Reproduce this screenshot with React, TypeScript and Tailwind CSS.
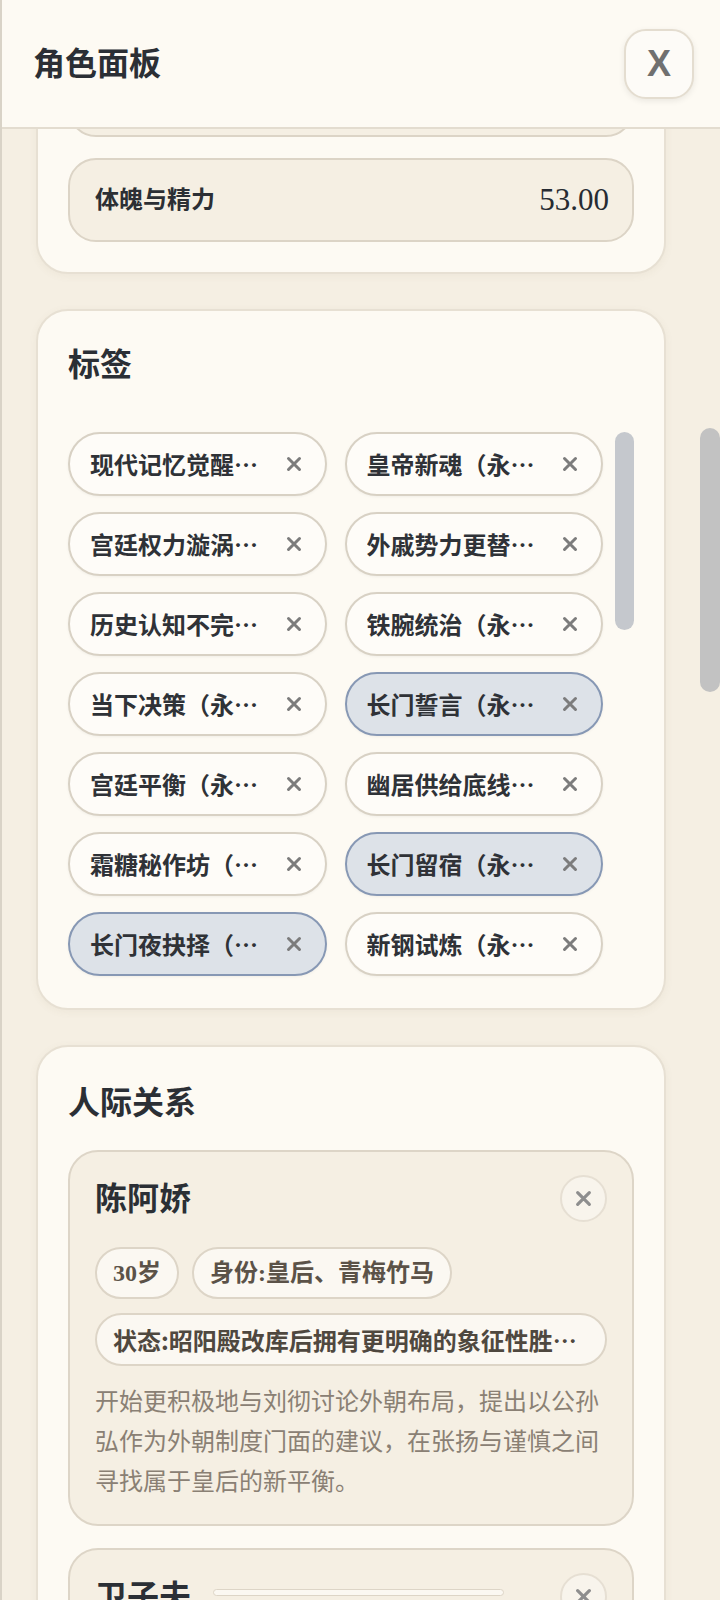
import React from "react";

const tags: { t: string; hl?: boolean }[] = [
  { t: "现代记忆觉醒（永久）" },
  { t: "皇帝新魂（永久）" },
  { t: "宫廷权力漩涡（永久）" },
  { t: "外戚势力更替（永久）" },
  { t: "历史认知不完整（永久）" },
  { t: "铁腕统治（永久）" },
  { t: "当下决策（永久）" },
  { t: "长门誓言（永久）", hl: true },
  { t: "宫廷平衡（永久）" },
  { t: "幽居供给底线（永久）" },
  { t: "霜糖秘作坊（永久）" },
  { t: "长门留宿（永久）", hl: true },
  { t: "长门夜抉择（永久）", hl: true },
  { t: "新钢试炼（永久）" },
];

function XIcon({ size = 16, color = "#7a7a7a", sw = 3 }: { size?: number; color?: string; sw?: number }) {
  return (
    <svg width={size} height={size} viewBox="0 0 16 16" fill="none">
      <path d="M2.5 2.5 L13.5 13.5 M13.5 2.5 L2.5 13.5" stroke={color} strokeWidth={sw} strokeLinecap="round" />
    </svg>
  );
}

function StatRow({ label, value }: { label: string; value: string }) {
  return (
    <div className="h-[84px] w-full rounded-[28px] border-2 border-[#dcd4c6] bg-[#f5efe3] flex items-center justify-between pl-[25px] pr-[23px]">
      <span className="text-[24px] font-bold text-[#2c2f34]">{label}</span>
      <span className="text-[31px] text-[#262b32] font-['Liberation_Serif',serif]">{value}</span>
    </div>
  );
}

function Card({ children, className = "" }: { children: React.ReactNode; className?: string }) {
  return (
    <div
      className={
        "w-[630px] shrink-0 rounded-[32px] border-2 border-[#e7e0d3] bg-[#fdfaf3] px-[30px] shadow-[0_2px_8px_rgba(120,100,70,0.06)] " +
        className
      }
    >
      {children}
    </div>
  );
}

export default function App() {
  return (
    <div className="w-[720px] h-[1600px] overflow-hidden flex flex-col bg-[#f5efe3] border-l-2 border-[#d9d3c7] font-['Liberation_Serif','Noto_Sans_CJK_SC',serif] text-[#2b2f35]">
      {/* Header */}
      <div className="h-[129px] shrink-0 bg-[#fdfaf3] border-b-2 border-[#e3dccf] flex items-center justify-between pl-[31px] pr-[26px] relative z-10">
        <h1 className="text-[32px] font-bold text-[#2b2f35] leading-[40px]">角色面板</h1>
        <button className="w-[70px] h-[70px] rounded-[22px] border-2 border-[#e4ddd0] bg-[#fdfbf7] shadow-[0_2px_6px_rgba(0,0,0,0.08)] flex items-center justify-center text-[36px] font-bold text-[#707070] font-['Liberation_Sans',sans-serif]">
          X
        </button>
      </div>

      {/* Body */}
      <div className="flex-1 flex overflow-hidden">
        <div className="w-[698px] shrink-0 px-[34px]">
          <div className="-mt-[110px] flex flex-col gap-[35px]">
            {/* Card 1 */}
            <Card className="pt-[32px] pb-[30px]">
              <div className="flex flex-col gap-[21px]">
                <StatRow label="智慧与谋略" value="61.00" />
                <StatRow label="体魄与精力" value="53.00" />
              </div>
            </Card>

            {/* Card 2 - Tags */}
            <Card className="pt-[34px] pb-[32px]">
              <h2 className="text-[32px] leading-[40px] font-bold text-[#2b2f35]">标签</h2>
              <div className="mt-[47px] flex gap-[12px]">
                <div className="flex-1 grid grid-cols-2 gap-x-[18px] gap-y-[16px]">
                  {tags.map((tg, i) => (
                    <div
                      key={i}
                      className={
                        "h-[64px] rounded-full border-2 flex items-center pl-[20px] pr-[23px] gap-[14px] shadow-[0_1px_3px_rgba(0,0,0,0.05)] " +
                        (tg.hl ? "bg-[#dde2e8] border-[#8798b4]" : "bg-[#fefcf8] border-[#d8d1c4]")
                      }
                    >
                      <span className="flex-1 min-w-0 truncate text-[24px] font-semibold text-[#2f3237] leading-[30px] font-['Noto_Sans_CJK_SC',sans-serif]">
                        {tg.t}
                      </span>
                      <XIcon size={16} color="#7c7c7c" sw={3} />
                    </div>
                  ))}
                </div>
                <div className="w-[19px] shrink-0">
                  <div className="h-[198px] w-full rounded-full bg-[#c5c8cd]" />
                </div>
              </div>
            </Card>

            {/* Card 3 - Relations */}
            <Card className="pt-[36px] pb-[30px]">
              <h2 className="text-[32px] leading-[40px] font-bold text-[#2b2f35]">人际关系</h2>
              <div className="mt-[27px] flex flex-col gap-[22px]">
                <div className="rounded-[30px] border-2 border-[#ddd5c7] bg-[#f5efe3] px-[25px] pt-[23px] pb-[22px]">
                  <div className="h-[47px] flex items-center justify-between">
                    <span className="text-[32px] leading-[40px] font-bold text-[#2b2f35]">陈阿娇</span>
                    <div className="w-[47px] h-[47px] rounded-full border-2 border-[#e6dfd3] bg-[#f8f4ec] flex items-center justify-center">
                      <XIcon size={17} color="#8e8e8e" sw={3} />
                    </div>
                  </div>
                  <div className="mt-[25px] flex gap-[13px]">
                    <span className="h-[52px] rounded-full border-2 border-[#ddd5c7] bg-[#fbf8f2] px-[16px] flex items-center text-[24px] font-semibold text-[#5b5248]">
                      30岁
                    </span>
                    <span className="h-[52px] rounded-full border-2 border-[#ddd5c7] bg-[#fbf8f2] px-[16px] flex items-center text-[24px] font-semibold text-[#5b5248]">
                      身份:皇后、青梅竹马
                    </span>
                  </div>
                  <div className="mt-[14px] h-[53px] rounded-full border-2 border-[#ddd5c7] bg-[#fbf8f2] pl-[16px] pr-[18px] flex items-center">
                    <span className="truncate text-[24px] font-bold text-[#4f483f] font-['Noto_Sans_CJK_SC',sans-serif]">
                      状态:昭阳殿改库后拥有更明确的象征性胜利与后宫话语权
                    </span>
                  </div>
                  <p className="mt-[16px] text-[24px] leading-[40px] text-[#8a8074]">
                    开始更积极地与刘彻讨论外朝布局，提出以公孙弘作为外朝制度门面的建议，在张扬与谨慎之间寻找属于皇后的新平衡。
                  </p>
                </div>

                <div className="rounded-[30px] border-2 border-[#ddd5c7] bg-[#f5efe3] px-[25px] pt-[23px] pb-[22px]">
                  <div className="h-[47px] flex items-center justify-between">
                    <div className="flex items-center gap-[22px]">
                      <span className="text-[32px] leading-[40px] font-bold text-[#2b2f35]">卫子夫</span>
                      <div className="w-[291px] h-[7px] rounded-full border border-[#ddd5c7] bg-[#fbf8f2] -mt-[8px]" />
                    </div>
                    <div className="w-[47px] h-[47px] rounded-full border-2 border-[#e6dfd3] bg-[#f8f4ec] flex items-center justify-center">
                      <XIcon size={17} color="#8e8e8e" sw={3} />
                    </div>
                  </div>
                  <div className="h-[200px]" />
                </div>
              </div>
            </Card>
          </div>
        </div>

        {/* Outer scrollbar */}
        <div className="w-[20px] shrink-0">
          <div className="mt-[299px] h-[264px] w-full rounded-full bg-[#c2c2c2]" />
        </div>
      </div>
    </div>
  );
}
